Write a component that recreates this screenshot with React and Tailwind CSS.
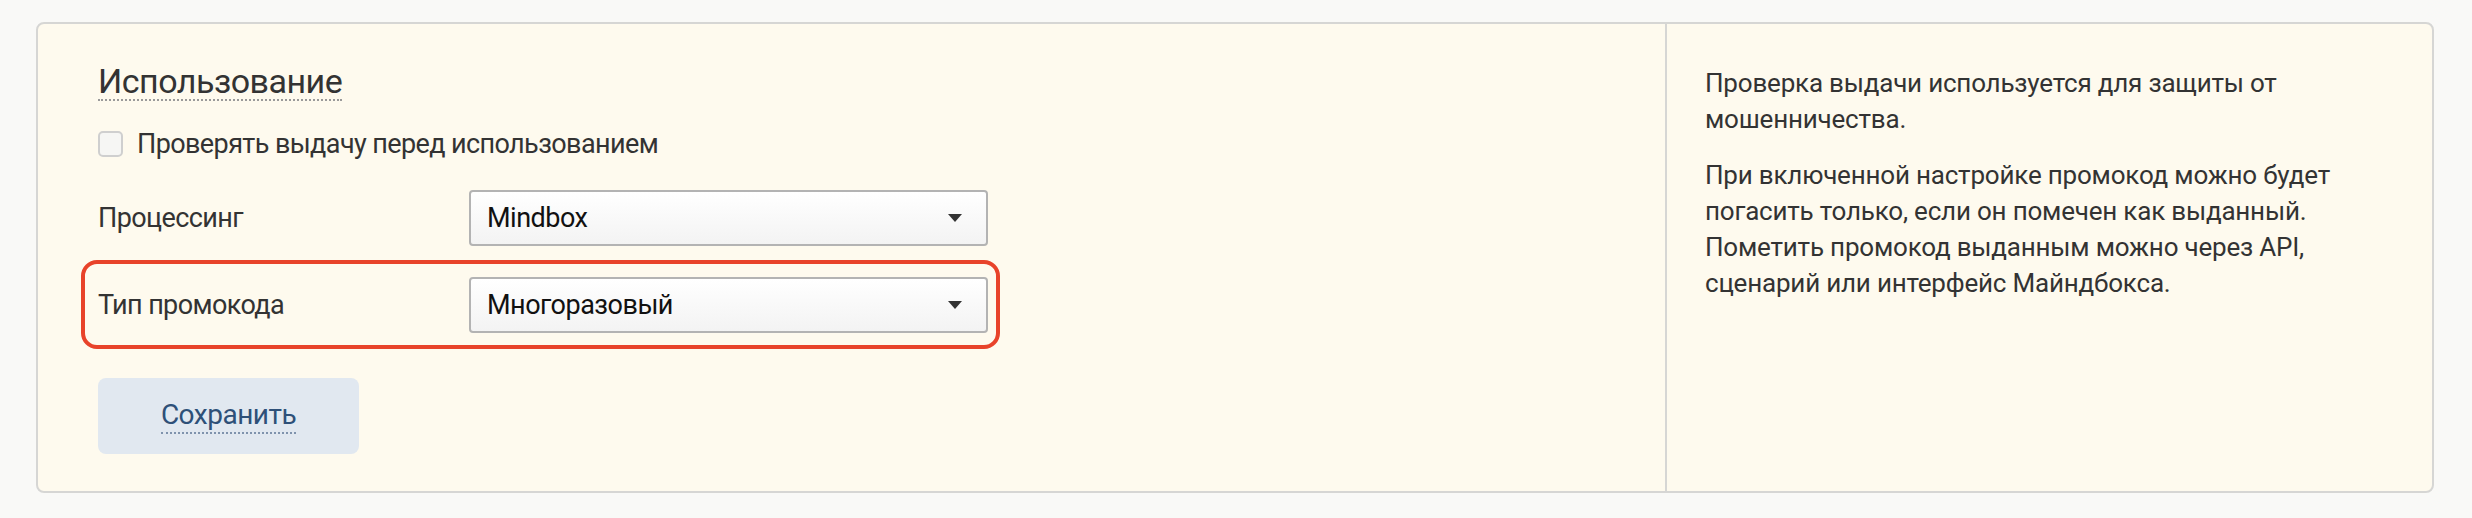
const font = { fontFamily: "Roboto, 'Liberation Sans', sans-serif" };

function Caret() {
  return (
    <svg width="14" height="8" viewBox="0 0 14 8" className="shrink-0">
      <path d="M0 0 H14 L7 8 Z" fill="#333" />
    </svg>
  );
}

function Select({ value }) {
  return (
    <div className="w-[519px] h-[56px] flex items-center justify-between pl-[16px] pr-[24px] border-2 border-[#b3b3b3] rounded-[4px] bg-gradient-to-b from-white to-[#f3f3f3] text-[27px] leading-[32px] text-[#111] tracking-[-0.5px]">
      <span>{value}</span>
      <Caret />
    </div>
  );
}

function Row({ label, value, highlight }) {
  return (
    <div className="relative flex items-center">
      <div className="w-[371px] text-[27px] leading-[32px] text-[#333] tracking-[-0.6px]">{label}</div>
      <Select value={value} />
      {highlight && (
        <div className="absolute left-[-17px] top-[-17px] w-[919px] h-[89px] border-4 border-[#e8432a] rounded-[16px] pointer-events-none" />
      )}
    </div>
  );
}

export default function App() {
  return (
    <div className="w-full h-[518px] bg-[#f9f9f7] pt-[22px] pl-[36px] pr-[38px]" style={font}>
      <div className="h-[471px] flex border-2 border-[#d6d6d4] rounded-[8px] bg-[#fefaee]">
        <div className="w-[1629px] pl-[60px] pt-[39px] border-r-2 border-[#d6d6d4]">
          <h2 className="w-fit text-[34px] leading-[36px] text-[#333] tracking-[-0.5px] border-b-2 border-dotted border-[#9a9a9a]">
            Использование
          </h2>
          <label className="mt-[27px] flex items-center gap-[14px] text-[27px] leading-[32px] text-[#333] tracking-[-0.6px]">
            <span className="w-[25px] h-[26px] rounded-[5px] border-2 border-[#cfcfcf] bg-[#f6f6f4]" />
            Проверять выдачу перед использованием
          </label>
          <div className="mt-[30px] flex flex-col gap-[31px]">
            <Row label="Процессинг" value="Mindbox" />
            <Row label="Тип промокода" value="Многоразовый" highlight />
          </div>
          <button className="mt-[45px] w-[261px] h-[76px] rounded-[8px] bg-[#e1e8f0] flex items-center justify-center">
            <span className="text-[28px] text-[#2e5078] tracking-[-0.5px] leading-[34px] border-b-2 border-dotted border-[#7f93ad]">
              Сохранить
            </span>
          </button>
        </div>
        <div className="flex-1 pl-[38px] pt-[41px] text-[26px] leading-[36px] text-[#333] tracking-[-0.2px]">
          <p>
            Проверка выдачи используется для защиты от
            <br />
            мошенничества.
          </p>
          <p className="mt-[20px]">
            При включенной настройке промокод можно будет
            <br />
            погасить только, если он помечен как выданный.
            <br />
            Пометить промокод выданным можно через API,
            <br />
            сценарий или интерфейс Майндбокса.
          </p>
        </div>
      </div>
    </div>
  );
}
